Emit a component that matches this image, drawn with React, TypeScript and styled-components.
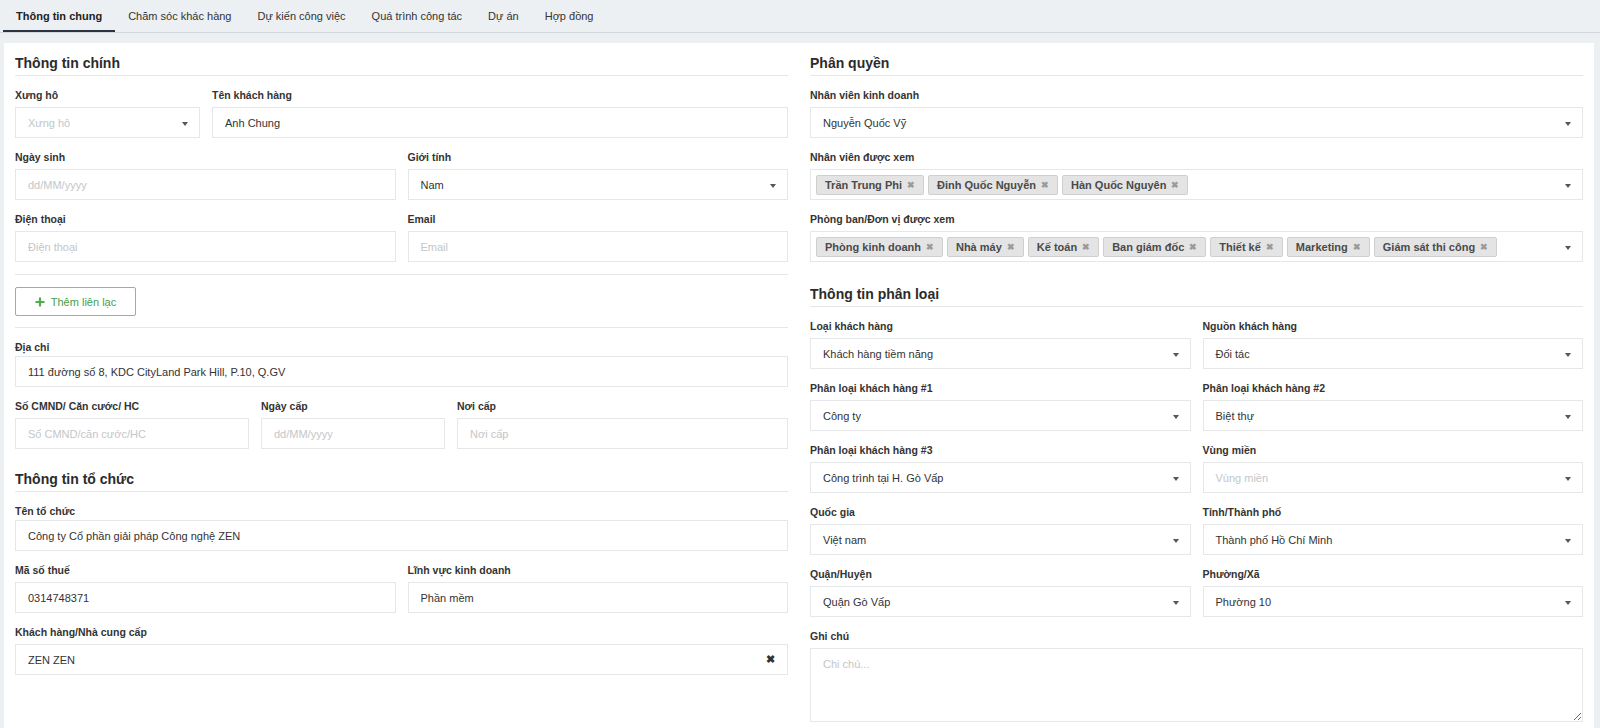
import React from 'react'
import styled, { createGlobalStyle } from 'styled-components'

const GlobalStyle = createGlobalStyle`
  html, body {
    margin: 0;
    padding: 0;
    overflow: hidden;
    background: #edf0f2;
    font-family: "Liberation Sans", Arial, Helvetica, sans-serif;
    color: #333;
  }
  * { box-sizing: border-box; }
`

const TabBar = styled.div`
  display: flex;
  height: 33px;
  padding-left: 3px;
  border-bottom: 1px solid #d3d7db;
  background: #edf0f2;
`

const Tab = styled.div<{ $active?: boolean }>`
  display: flex;
  align-items: center;
  height: 32px;
  padding: 2px 13px 0;
  font-size: 11px;
  font-weight: ${({ $active }) => ($active ? 700 : 400)};
  color: ${({ $active }) => ($active ? '#222' : '#333')};
  border-bottom: 2px solid ${({ $active }) => ($active ? '#2a3342' : 'transparent')};
`

const Card = styled.div`
  margin: 10px 6px 0 4px;
  padding: 12px 11px 20px;
  background: #fff;
  min-height: 720px;
  display: grid;
  grid-template-columns: 1fr 1fr;
  column-gap: 22px;
  align-items: start;
`

const Column = styled.div`
  display: flex;
  flex-direction: column;
`

const SectionTitle = styled.div<{ $gap?: number }>`
  margin-top: ${({ $gap }) => $gap || 0}px;
  margin-bottom: 12px;
  padding-bottom: 3px;
  border-bottom: 1px solid #e4e6e8;
  font-size: 14px;
  line-height: 17px;
  font-weight: 700;
  color: #2b2b2b;
`

const Row = styled.div<{ $cols?: string }>`
  display: grid;
  grid-template-columns: ${({ $cols }) => $cols || '1fr'};
  column-gap: 12px;
  margin-bottom: 12px;
`

const Field = styled.div`
  display: flex;
  flex-direction: column;
  min-width: 0;
`

const Label = styled.label<{ $tight?: boolean }>`
  font-size: 10.5px;
  line-height: 14px;
  font-weight: 700;
  color: #333;
  margin-bottom: ${({ $tight }) => ($tight ? 2 : 5)}px;
`

const TextBox = styled.input`
  height: 31px;
  width: 100%;
  padding: 0 12px;
  border: 1px solid #e5e7e9;
  border-radius: 0;
  font-family: inherit;
  font-size: 11px;
  color: #333;
  background: #fff;
  outline: none;
  &::placeholder {
    color: #c4c6c8;
  }
`

const SelectBox = styled.div`
  position: relative;
  display: flex;
  align-items: center;
  height: 31px;
  padding: 0 30px 0 12px;
  border: 1px solid #e5e7e9;
  background: #fff;
  font-size: 11px;
`

const Value = styled.span<{ $placeholder?: boolean }>`
  color: ${({ $placeholder }) => ($placeholder ? '#c4c6c8' : '#333')};
  white-space: nowrap;
`

const Caret = styled.span`
  position: absolute;
  right: 11px;
  top: 14px;
  width: 0;
  height: 0;
  border-left: 3.5px solid transparent;
  border-right: 3.5px solid transparent;
  border-top: 4px solid #555;
`

const ClearIcon = styled.span`
  position: absolute;
  right: 12px;
  top: 8px;
  font-size: 11px;
  font-weight: 700;
  color: #333;
`

const TagList = styled.div`
  display: flex;
  gap: 4px;
  align-items: center;
  margin-left: -7px;
`

const Tag = styled.span`
  display: inline-flex;
  align-items: center;
  gap: 5px;
  height: 20px;
  padding: 0 8px;
  background: #e4e4e4;
  border: 1px solid #cfcfcf;
  border-radius: 2px;
  font-size: 11px;
  font-weight: 700;
  color: #4a4a4a;
`

const TagRemove = styled.span`
  font-size: 9px;
  color: #9a9a9a;
`

const Divider = styled.div<{ $after?: number }>`
  height: 1px;
  background: #e4e6e8;
  margin-bottom: ${({ $after }) => $after || 12}px;
`

const ButtonRow = styled.div`
  margin-bottom: 11px;
`

const AddButton = styled.button`
  display: inline-flex;
  align-items: center;
  justify-content: center;
  gap: 6px;
  width: 121px;
  height: 29px;
  border: 1px solid #7dc47f;
  border-radius: 2px;
  background: #fff;
  color: #45a049;
  font-family: inherit;
  font-size: 11px;
`

const NoteArea = styled.textarea`
  height: 74px;
  width: 100%;
  padding: 9px 12px;
  border: 1px solid #e5e7e9;
  font-family: inherit;
  font-size: 11px;
  color: #333;
  resize: vertical;
  outline: none;
  &::placeholder {
    color: #c4c6c8;
  }
`

const tabs = ['Thông tin chung', 'Chăm sóc khác hàng', 'Dự kiến công việc', 'Quá trình công tác', 'Dự án', 'Hợp đồng']
const viewers = ['Trần Trung Phi', 'Đinh Quốc Nguyễn', 'Hàn Quốc Nguyên']
const departments = ['Phòng kinh doanh', 'Nhà máy', 'Kế toán', 'Ban giám đốc', 'Thiết kế', 'Marketing', 'Giám sát thi công']

type FieldProps = { label: string; value?: string; placeholder?: string; tight?: boolean }

const Input = ({ label, value, placeholder, tight }: FieldProps) => (
  <Field>
    <Label $tight={tight}>{label}</Label>
    <TextBox readOnly value={value ?? ''} placeholder={placeholder} />
  </Field>
)

const Select = ({ label, value, placeholder }: FieldProps) => (
  <Field>
    <Label>{label}</Label>
    <SelectBox>
      <Value $placeholder={!value}>{value || placeholder}</Value>
      <Caret />
    </SelectBox>
  </Field>
)

const MultiSelect = ({ label, items }: { label: string; items: string[] }) => (
  <Field>
    <Label>{label}</Label>
    <SelectBox>
      <TagList>
        {items.map((item) => (
          <Tag key={item}>
            {item}
            <TagRemove>✖</TagRemove>
          </Tag>
        ))}
      </TagList>
      <Caret />
    </SelectBox>
  </Field>
)

const PlusIcon = () => (
  <svg width="10" height="10" viewBox="0 0 10 10">
    <path d="M5 0.5v9M0.5 5h9" stroke="#4cae4c" strokeWidth="2.2" />
  </svg>
)

export default function App() {
  return (
    <>
      <GlobalStyle />
      <TabBar>
        {tabs.map((t, i) => (
          <Tab key={t} $active={i === 0}>
            {t}
          </Tab>
        ))}
      </TabBar>
      <Card>
        <Column>
          <SectionTitle>Thông tin chính</SectionTitle>
          <Row $cols="185px 1fr">
            <Select label="Xưng hô" placeholder="Xưng hô" />
            <Input label="Tên khách hàng" value="Anh Chung" />
          </Row>
          <Row $cols="1fr 1fr">
            <Input label="Ngày sinh" placeholder="dd/MM/yyyy" />
            <Select label="Giới tính" value="Nam" />
          </Row>
          <Row $cols="1fr 1fr">
            <Input label="Điện thoại" placeholder="Điện thoại" />
            <Input label="Email" placeholder="Email" />
          </Row>
          <Divider $after={12} />
          <ButtonRow>
            <AddButton>
              <PlusIcon />
              Thêm liên lạc
            </AddButton>
          </ButtonRow>
          <Divider $after={12} />
          <Row>
            <Input tight label="Địa chỉ" value="111 đường số 8, KDC CityLand Park Hill, P.10, Q.GV" />
          </Row>
          <Row $cols="234px 184px 1fr">
            <Input label="Số CMND/ Căn cước/ HC" placeholder="Số CMND/căn cước/HC" />
            <Input label="Ngày cấp" placeholder="dd/MM/yyyy" />
            <Input label="Nơi cấp" placeholder="Nơi cấp" />
          </Row>
          <SectionTitle $gap={10}>Thông tin tổ chức</SectionTitle>
          <Row>
            <Input tight label="Tên tổ chức" value="Công ty Cổ phần giải pháp Công nghệ ZEN" />
          </Row>
          <Row $cols="1fr 1fr">
            <Input label="Mã số thuế" value="0314748371" />
            <Input label="Lĩnh vực kinh doanh" value="Phần mềm" />
          </Row>
          <Row>
            <Field>
              <Label>Khách hàng/Nhà cung cấp</Label>
              <SelectBox>
                <Value>ZEN ZEN</Value>
                <ClearIcon>✖</ClearIcon>
              </SelectBox>
            </Field>
          </Row>
        </Column>
        <Column>
          <SectionTitle>Phân quyền</SectionTitle>
          <Row>
            <Select label="Nhân viên kinh doanh" value="Nguyễn Quốc Vỹ" />
          </Row>
          <Row>
            <MultiSelect label="Nhân viên được xem" items={viewers} />
          </Row>
          <Row>
            <MultiSelect label="Phòng ban/Đơn vị được xem" items={departments} />
          </Row>
          <SectionTitle $gap={12}>Thông tin phân loại</SectionTitle>
          <Row $cols="1fr 1fr">
            <Select label="Loại khách hàng" value="Khách hàng tiềm năng" />
            <Select label="Nguồn khách hàng" value="Đối tác" />
          </Row>
          <Row $cols="1fr 1fr">
            <Select label="Phân loại khách hàng #1" value="Công ty" />
            <Select label="Phân loại khách hàng #2" value="Biệt thự" />
          </Row>
          <Row $cols="1fr 1fr">
            <Select label="Phân loại khách hàng #3" value="Công trình tại H. Gò Vấp" />
            <Select label="Vùng miền" placeholder="Vùng miền" />
          </Row>
          <Row $cols="1fr 1fr">
            <Select label="Quốc gia" value="Việt nam" />
            <Select label="Tỉnh/Thành phố" value="Thành phố Hồ Chí Minh" />
          </Row>
          <Row $cols="1fr 1fr">
            <Select label="Quận/Huyện" value="Quận Gò Vấp" />
            <Select label="Phường/Xã" value="Phường 10" />
          </Row>
          <Field>
            <Label>Ghi chú</Label>
            <NoteArea readOnly placeholder="Chi chú..." />
          </Field>
        </Column>
      </Card>
    </>
  )
}
